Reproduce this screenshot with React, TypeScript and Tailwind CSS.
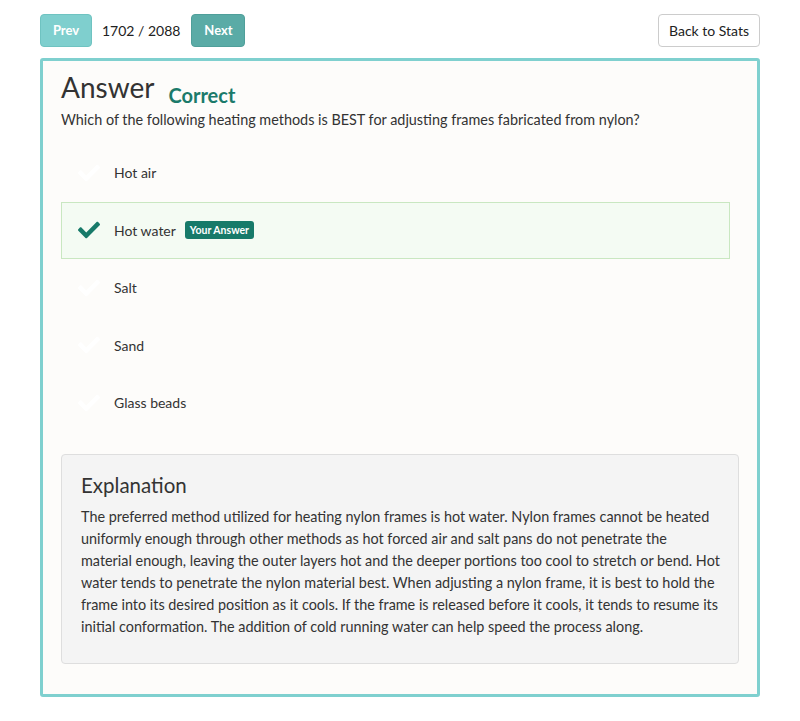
import React from "react";

const Check = ({ className }: { className?: string }) => (
  <svg viewBox="0 0 512 512" className={className} fill="currentColor">
    <path d="M173.898 439.404l-166.4-166.4c-9.997-9.997-9.997-26.206 0-36.204l36.203-36.204c9.997-9.998 26.207-9.998 36.204 0L192 312.69 432.095 72.596c9.997-9.997 26.207-9.997 36.204 0l36.203 36.204c9.997 9.997 9.997 26.206 0 36.204l-294.4 294.401c-9.998 9.997-26.207 9.997-36.204-.001z" />
  </svg>
);

const options = [
  { text: "Hot air", selected: false },
  { text: "Hot water", selected: true },
  { text: "Salt", selected: false },
  { text: "Sand", selected: false },
  { text: "Glass beads", selected: false },
];

const lines = [
  "The preferred method utilized for heating nylon frames is hot water. Nylon frames cannot be heated",
  "uniformly enough through other methods as hot forced air and salt pans do not penetrate the",
  "material enough, leaving the outer layers hot and the deeper portions too cool to stretch or bend. Hot",
  "water tends to penetrate the nylon material best. When adjusting a nylon frame, it is best to hold the",
  "frame into its desired position as it cools. If the frame is released before it cools, it tends to resume its",
  "initial conformation. The addition of cold running water can help speed the process along.",
];

export default function App() {
  return (
    <div
      className="w-[800px] h-[721px] bg-white text-[#333] overflow-hidden"
      style={{ fontFamily: "Lato, 'Open Sans', sans-serif" }}
    >
      <div className="px-[40px] pt-[14px]">
        <div className="flex items-center justify-between">
          <div className="flex items-center">
            <button className="h-[33px] w-[52px] rounded-[4px] bg-[#7fcfce] border border-[#6fc3c1] text-white font-bold text-[13px]">
              Prev
            </button>
            <span className="ml-[10px] text-[14px] text-[#222]">1702 / 2088</span>
            <button className="ml-[11px] h-[33px] w-[54px] rounded-[4px] bg-[#5aaba6] border border-[#4f9f9a] text-white font-bold text-[13px]">
              Next
            </button>
          </div>
          <button className="h-[33px] w-[102px] rounded-[4px] bg-white border border-[#cccccc] text-[14px] text-[#222]">
            Back to Stats
          </button>
        </div>

        <div className="mt-[11px] h-[639px] border-[3px] border-[#7fd0cf] rounded-[3px] bg-[#fdfcfa] px-[18px] pt-[8px]">
          <div className="flex items-start">
            <h1 className="text-[28px] leading-[36px] text-[#333]">Answer</h1>
            <span className="ml-[14px] mt-[13px] text-[20px] font-bold leading-[26px] text-[#1b7a6a]">Correct</span>
          </div>
          <p className="mt-[2px] text-[14.4px] leading-[20px] text-[#333]">
            Which of the following heating methods is BEST for adjusting frames fabricated from nylon?
          </p>

          <div className="mt-[14px] mr-[9px]">
            {options.map((o) => (
              <div
                key={o.text}
                className={
                  "flex items-center h-[57.5px] pl-[16px] border " +
                  (o.selected ? "bg-[#f4fbf3] border-[#c9e7c1]" : "border-transparent")
                }
              >
                <Check
                  className={
                    "w-[22px] h-[22px] " + (o.selected ? "text-[#177a69]" : "text-white")
                  }
                />
                <span className="ml-[14px] text-[14px] text-[#333]">{o.text}</span>
                {o.selected && (
                  <span className="ml-[9px] h-[18px] px-[5px] rounded-[3px] bg-[#177a69] text-white text-[10.5px] font-bold leading-[18px]">
                    Your Answer
                  </span>
                )}
              </div>
            ))}
          </div>

          <div className="mt-[22px] border border-[#dedede] rounded-[4px] bg-[#f4f4f4] px-[19px] pt-[16px] pb-[25px]">
            <h2 className="text-[20.5px] leading-[28px] text-[#333]">Explanation</h2>
            <p className="mt-[7px] text-[14.4px] leading-[22px] text-[#333]">
              {lines.map((l) => (
                <span key={l} className="block whitespace-nowrap">
                  {l}
                </span>
              ))}
            </p>
          </div>
        </div>
      </div>
    </div>
  );
}
